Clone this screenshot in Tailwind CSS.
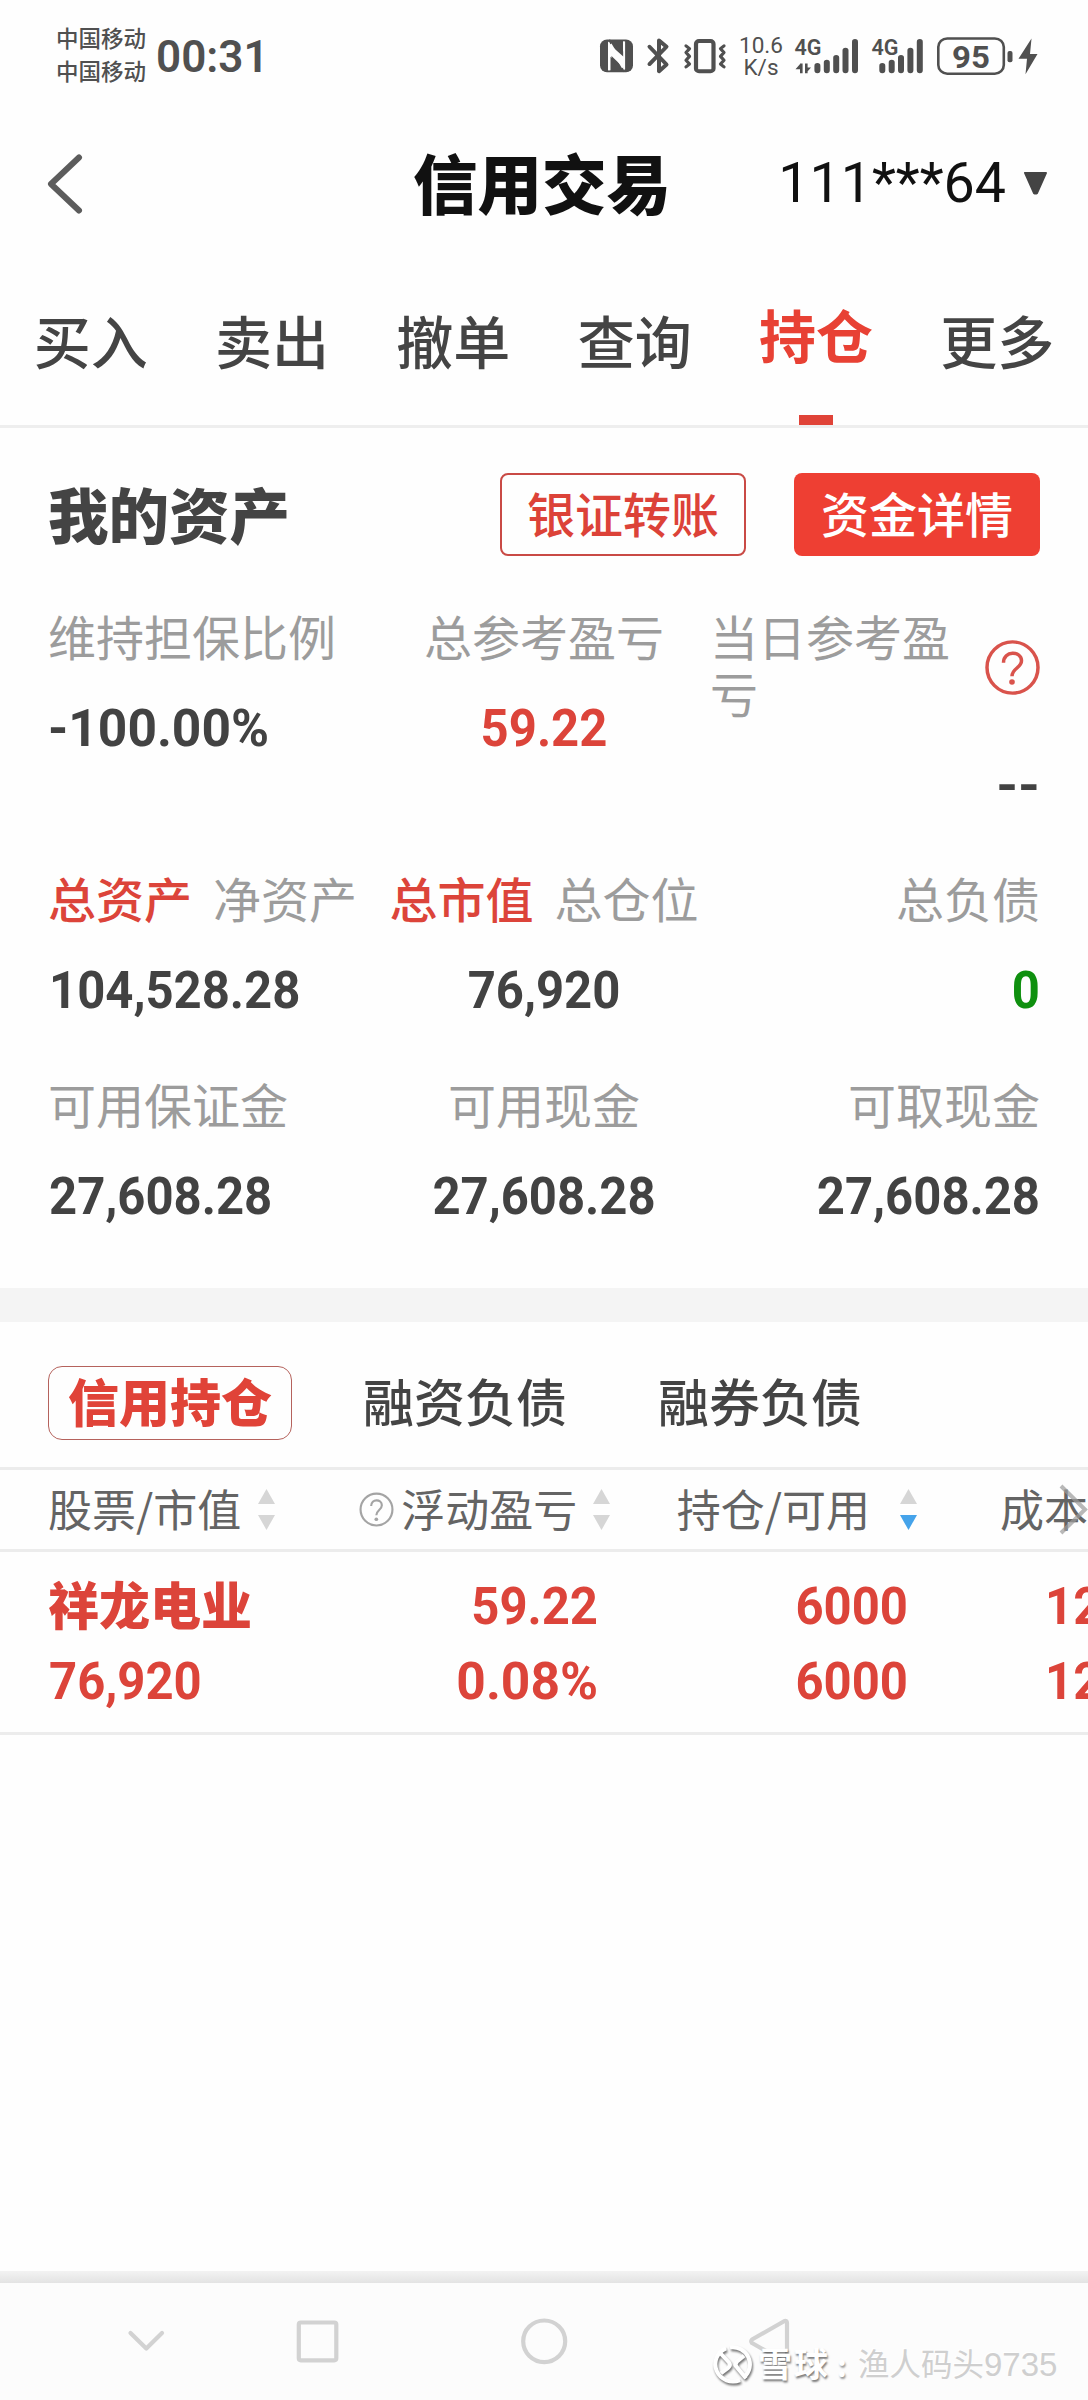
<!DOCTYPE html>
<html lang="zh-CN">
<head>
<meta charset="utf-8">
<title>信用交易</title>
<script src="https://cdn.jsdelivr.net/npm/@tailwindcss/browser@4"></script>
</head>
<body class="bg-white">
<div class="flex h-[2400px] w-[1088px] flex-col overflow-hidden bg-[#fefefe] font-['Noto_Sans_CJK_SC',sans-serif] text-[#444]">

  <!-- Status bar -->
  <div class="flex h-[104px] shrink-0 items-start justify-between pl-[56px] pr-[44px]">
    <div class="flex items-start text-[#505050]">
      <div class="w-[100px] pt-[21px] text-[22.5px] leading-[33px] font-medium"><div>中国移动</div><div>中国移动</div></div>
      <div class="origin-left pt-[34px] font-['Roboto',sans-serif] text-[44px] leading-[46px] font-semibold">00:31</div>
    </div>
    <svg class="mt-[28.8px] h-[53.8px] w-[448px] font-['Roboto',sans-serif]" viewBox="596 30 448 56" preserveAspectRatio="none" fill="#505050">
      <rect x="600" y="41" width="33" height="34" rx="7"/>
      <path d="M608 43l15 14v-14l1.5 0v30l-14-14v14h-2.5z" fill="#fefefe"/>
      <path d="M609.500 40.500l14 13v5.500l-14-13zM611.500 58l12 12v5l-12-12z" fill="#505050"/>
      <path d="M609 44v29M624.200 43v29" stroke="#fefefe" stroke-width="1.800" fill="none"/>
      <path d="M610 46l13.500 24" stroke="#fefefe" stroke-width="3.500" fill="none"/>
      <path d="M649.500 48.500l17 18.500l-7.500 7V42l7.500 6.500l-17 18" fill="none" stroke="#505050" stroke-width="4" stroke-linecap="round" stroke-linejoin="round"/>
      <rect x="696" y="42.500" width="17.500" height="31.500" rx="3" fill="none" stroke="#505050" stroke-width="4.200"/>
      <path d="M686 47.500l3.500 3l-3.500 4l3.500 4l-3.500 4l3.500 4l-3.500 3M724 47.500l-3.500 3l3.500 4l-3.500 4l3.500 4l-3.500 4l3.500 3" fill="none" stroke="#505050" stroke-width="3.200" stroke-linecap="round" stroke-linejoin="round"/>
      <text x="739" y="55.500" font-size="23.500" textLength="44" lengthAdjust="spacingAndGlyphs">10.6</text>
      <text x="743.500" y="77.500" font-size="23" textLength="35" lengthAdjust="spacingAndGlyphs">K/s</text>
      <text x="794.500" y="57.500" font-size="23" font-weight="600" textLength="27" lengthAdjust="spacingAndGlyphs">4G</text>
      <path d="M800 66v10h2.600v-10zM800.500 66l-5 6h5zM805 66v10h2.600v-10zM806 76l5-6h-5z"/>
      <g stroke="#505050" stroke-width="6" stroke-linecap="round">
        <path d="M817.400 68.500V73M826.800 65V73M836.200 60V73M845.500 52.500V73M855 43.500V73"/>
        <path d="M882.300 68.500V73M891.700 65V73M901 60V73M910.400 52.500V73M919.800 43.500V73"/>
      </g>
      <text x="871.500" y="57.500" font-size="23" font-weight="600" textLength="27" lengthAdjust="spacingAndGlyphs">4G</text>
      <rect x="938.300" y="39.800" width="65.500" height="36.700" rx="9" fill="none" stroke="#505050" stroke-width="2.600"/>
      <text x="971" y="70.500" font-size="33" font-weight="700" text-anchor="middle">95</text>
      <rect x="1007.500" y="53" width="5" height="11.500" rx="2"/>
      <path d="M1031.500 40L1018.500 61H1027L1025.500 77L1037.500 56H1030z"/>
    </svg>
  </div>

  <!-- Title bar -->
  <div class="grid h-[160px] shrink-0 grid-cols-[1fr_260px_1fr] items-center pl-[46px] pr-[40px]">
    <svg class="h-[60px] w-[38px]" viewBox="0 0 38 60" fill="none" stroke="#5c5c5c" stroke-width="6" stroke-linecap="round" stroke-linejoin="round"><path d="M33 3.500L5 30L33 56.500"/></svg>
    <h1 class="-ml-[4px] pb-[7px] text-[64.500px] leading-[64px] font-black whitespace-nowrap text-[#111]">信用交易</h1>
    <div class="flex items-center justify-end gap-[17px]">
      <div class="font-['Roboto',sans-serif] text-[55.500px] leading-[58px] text-[#111]">111***64</div>
      <svg class="mb-[3px] h-[24px] w-[25px]" viewBox="0 0 25 25" preserveAspectRatio="none" fill="#444" stroke="#444" stroke-width="2" stroke-linejoin="round"><path d="M2 2H23L14 23Q12.500 24 11 23z"/></svg>
    </div>
  </div>

  <!-- Main tabs -->
  <div class="grid h-[164px] shrink-0 grid-cols-6 border-b-[3px] border-[#eee] text-center text-[57px] leading-[56px] font-medium">
    <div class="pt-[47px]">买入</div>
    <div class="pt-[47px]">卖出</div>
    <div class="pt-[47px]">撤单</div>
    <div class="pt-[47px]">查询</div>
    <div class="flex flex-col items-center pt-[41px] font-bold text-[#e84134]">持仓<span class="mt-auto h-[10px] w-[34px] bg-[#e04338]"></span></div>
    <div class="pt-[47px]">更多</div>
  </div>

  <!-- Assets -->
  <div class="h-[860px] shrink-0 px-[48px] pt-[45px]">
    <div class="flex h-[83px] items-center">
      <h2 class="mr-auto pb-[4px] text-[60.500px] leading-[60px] font-black">我的资产</h2>
      <div class="mr-[48px] h-[83px] w-[246px] rounded-[8px] border-2 border-[#c94a45] text-center text-[48px] leading-[75px] font-medium text-[#dc4238]">银证转账</div>
      <div class="h-[83px] w-[246px] rounded-[8px] bg-[#ee3f33] text-center text-[48px] leading-[79px] font-medium text-white">资金详情</div>
    </div>

    <div class="mt-[51px] grid grid-cols-[330px_332px_330px] text-[48px] leading-[57px] text-[#9c9c9c]">
      <div>
        <div>维持担保比例</div>
        <div class="mt-[36px] origin-left font-['Roboto',sans-serif] text-[51.500px] leading-[57px] font-bold text-[#424242]">-100.00%</div>
      </div>
      <div class="text-center">
        <div>总参考盈亏</div>
        <div class="mt-[36px] scale-x-[.952] font-['Roboto',sans-serif] text-[51.500px] leading-[57px] font-bold text-[#dc443a]">59.22</div>
      </div>
      <div>
        <div class="flex items-center justify-between">
          <div class="w-[244px]">当日参考盈亏</div>
          <svg class="mt-[6px] h-[55px] w-[55px]" viewBox="0 0 55 57" preserveAspectRatio="none" fill="none" stroke="#d9534c" stroke-width="3.500"><ellipse cx="27.500" cy="28.500" rx="25.500" ry="26.500"/><path d="M18.500 23.500C18.500 10.500 36.500 11 36.500 21.500C36.500 29 27 29 27 37.500" stroke-linecap="butt"/><circle cx="27" cy="43.500" r="2.800" fill="#d9534c" stroke="none"/></svg>
        </div>
        <div class="mt-[36px] origin-right scale-x-[1.08] text-right font-['Roboto',sans-serif] text-[51.500px] leading-[57px] font-bold text-[#424242]">--</div>
      </div>
    </div>

    <div class="mt-[55px] grid grid-cols-[330px_332px_330px] text-[48px] leading-[57px] text-[#9c9c9c]">
      <div>
        <div class="flex gap-[21px]"><span class="font-medium text-[#dc443a]">总资产</span><span>净资产</span></div>
        <div class="mt-[36px] ml-px origin-left scale-x-[.952] font-['Roboto',sans-serif] text-[51.500px] leading-[57px] font-bold text-[#424242]">104,528.28</div>
      </div>
      <div class="text-center">
        <div class="flex justify-center gap-[21px]"><span class="font-medium text-[#dc443a]">总市值</span><span>总仓位</span></div>
        <div class="mt-[36px] scale-x-[.952] font-['Roboto',sans-serif] text-[51.500px] leading-[57px] font-bold text-[#424242]">76,920</div>
      </div>
      <div class="text-right">
        <div>总负债</div>
        <div class="mt-[36px] origin-right scale-x-[.952] font-['Roboto',sans-serif] text-[51.500px] leading-[57px] font-bold text-[#0f900f]">0</div>
      </div>
    </div>

    <div class="mt-[56px] grid grid-cols-[330px_332px_330px] text-[48px] leading-[57px] text-[#9c9c9c]">
      <div>
        <div>可用保证金</div>
        <div class="mt-[36px] ml-px origin-left scale-x-[.952] font-['Roboto',sans-serif] text-[51.500px] leading-[57px] font-bold text-[#424242]">27,608.28</div>
      </div>
      <div class="text-center">
        <div>可用现金</div>
        <div class="mt-[36px] scale-x-[.952] font-['Roboto',sans-serif] text-[51.500px] leading-[57px] font-bold text-[#424242]">27,608.28</div>
      </div>
      <div class="text-right">
        <div>可取现金</div>
        <div class="mt-[36px] origin-right scale-x-[.952] font-['Roboto',sans-serif] text-[51.500px] leading-[57px] font-bold text-[#424242]">27,608.28</div>
      </div>
    </div>
  </div>

  <div class="h-[34px] shrink-0 bg-[#f4f4f4]"></div>

  <!-- Position tabs -->
  <div class="flex h-[148px] shrink-0 items-start border-b-[3px] border-[#ececec] pt-[44px] pl-[48px] text-[51px] leading-[68px] font-medium">
    <div class="h-[74px] w-[244px] rounded-[14px] border border-[#b5625c] text-center leading-[66px] font-black text-[#e04338]">信用持仓</div>
    <div class="ml-[71px]">融资负债</div>
    <div class="ml-[91px]">融券负债</div>
  </div>

  <!-- Column headings -->
  <div class="relative flex h-[82px] shrink-0 items-center overflow-hidden border-b-[3px] border-[#ececec] pl-[48px] text-[44px] leading-[44px] whitespace-nowrap text-[#646464]">
    <div class="flex w-[313px] items-center gap-[17px]">
      <span class="pb-[4px]">股票/市值</span>
      <svg class="h-[41px] w-[17px]" viewBox="0 0 17 41" fill="#d6d6d6"><path d="M8.500 0L17 15H0zM0 26H17L8.500 41z"/></svg>
    </div>
    <div class="flex w-[319px] items-center">
      <svg class="h-[35px] w-[35px]" viewBox="0 0 36 36" fill="none" stroke="#a4a4a4" stroke-width="2.200"><circle cx="18" cy="18" r="16.400"/><path d="M12.500 14.500C12.500 6.500 23.500 7 23.500 13.500C23.500 18.500 17.800 18.500 17.800 24"/><circle cx="17.800" cy="28" r="1.900" fill="#a4a4a4" stroke="none"/></svg>
      <span class="ml-[7px] pb-[4px]">浮动盈亏</span>
      <svg class="ml-[16px] h-[41px] w-[17px]" viewBox="0 0 17 41" fill="#d6d6d6"><path d="M8.500 0L17 15H0zM0 26H17L8.500 41z"/></svg>
    </div>
    <div class="flex w-[325px] items-center">
      <span class="pb-[4px]">持仓/可用</span>
      <svg class="ml-[30px] h-[41px] w-[17px]" viewBox="0 0 17 41"><path d="M8.500 0L17 15H0z" fill="#d6d6d6"/><path d="M0 26H17L8.500 41z" fill="#45a3ea"/></svg>
    </div>
    <span class="shrink-0 pb-[4px]">成本</span>
    <svg class="absolute top-[13px] right-0 h-[53px] w-[30px]" viewBox="0 0 30 53" fill="none" stroke="#9a9a9a" stroke-opacity=".7" stroke-width="4"><path d="M3 3L27 26.500L3 50"/></svg>
  </div>

  <!-- Holding -->
  <div class="grid h-[183px] shrink-0 grid-cols-[250px_300px_310px_180px] content-start overflow-hidden border-b-[3px] border-[#ececec] pt-[26px] pl-[48px] font-['Roboto',sans-serif] text-[51.500px] leading-[57px] font-bold whitespace-nowrap text-[#dc443a]">
    <div class="font-['Noto_Sans_CJK_SC',sans-serif] text-[51px] leading-[50px] font-black">祥龙电业</div>
    <div class="origin-right scale-x-[.952] text-right">59.22</div>
    <div class="origin-right scale-x-[.952] text-right">6000</div>
    <div class="origin-left scale-x-[.952] pl-[144px]">12.82</div>
    <div class="mt-[18px] ml-px origin-left scale-x-[.952]">76,920</div>
    <div class="mt-[18px] text-right">0.08%</div>
    <div class="mt-[18px] origin-right scale-x-[.952] text-right">6000</div>
    <div class="mt-[18px] origin-left scale-x-[.952] pl-[144px]">12.82</div>
  </div>

  <!-- System navigation -->
  <div class="relative mt-auto h-[129px] shrink-0 bg-[#fcfcfc]">
    <div class="h-[12px] bg-linear-to-b from-[#f3f3f3] to-[#e3e3e3]"></div>
    <svg class="h-[117px] w-[1088px]" viewBox="0 2283 1088 117" fill="none" stroke="#d2d2d2" stroke-width="4.200" stroke-linecap="round" stroke-linejoin="round">
      <path d="M130.500 2333L146.300 2348.500L162 2333"/>
      <rect x="298.800" y="2322.500" width="37.500" height="37.800" rx="2"/>
      <ellipse cx="544.200" cy="2341.300" rx="21" ry="20.800"/>
      <path d="M752 2339.500L784.500 2321Q787 2320.500 787 2323V2360Q787 2362.500 784.500 2361.500L752 2343Q750.500 2341.300 752 2339.500z"/>
    </svg>
    <div class="absolute top-[71px] left-[711px] flex h-[44px] items-center whitespace-nowrap text-white">
      <svg class="h-[43px] w-[44px] drop-shadow-[1px_2px_1px_rgba(0,0,0,.55)]" viewBox="0 0 44 44" preserveAspectRatio="none" fill="none" stroke="#fff" stroke-width="4"><path d="M15 5.500A17.500 17.500 0 1 0 29 38M33 35A17.500 17.500 0 0 0 19 4.500"/><path d="M8 9L18 20Q20 23 17 25.500L10 31M33 13L26 19Q23 22 26 25L35 36"/></svg>
      <div class="ml-[3px] pb-[3px] text-[34px] leading-[44px] font-bold tracking-[2px] [text-shadow:1px_2px_2px_rgba(0,0,0,.5)]">雪球</div>
      <div class="w-[28px] pl-[7px] text-[30px] leading-[40px] font-bold [text-shadow:1px_2px_2px_rgba(0,0,0,.4)]">:</div>
      <div class="pb-[1px] text-[31.500px] leading-[44px] text-[#cfcfcf] [text-shadow:-1px_-1px_1px_#fff]">渔人码头<span class="font-['Liberation_Sans',sans-serif] text-[33px]">9735</span></div>
    </div>
  </div>
</div>
</body>
</html>
